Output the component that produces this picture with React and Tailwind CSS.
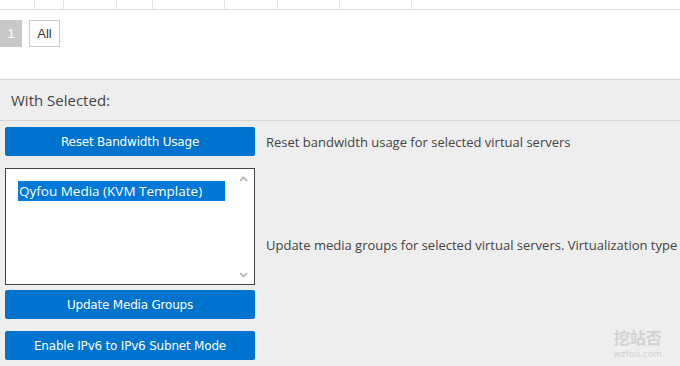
import React from 'react';

const cols = [35, 29, 53, 36, 72, 53, 62, 72];

const ActionButton = ({ children }) => (
  <button className="w-[250px] h-[29px] shrink-0 bg-[#0073cf] text-white text-[12px] rounded-[2px] font-['DejaVu_Sans',sans-serif] tracking-[-0.2px]">
    {children}
  </button>
);

export default function App() {
  return (
    <div className="w-[680px] h-[366px] overflow-hidden bg-white font-['Open_Sans',sans-serif]">
      {/* table bottom edge */}
      <div className="flex h-[10px] border-b border-[#dddddd]">
        {cols.map((w, i) => (
          <div key={i} style={{ width: w }} className="border-r border-[#e4e4e4] shrink-0" />
        ))}
      </div>

      {/* pagination */}
      <div className="flex gap-[7px] mt-[10px] h-[59px] text-[13px] font-['Liberation_Sans',sans-serif]">
        <div className="w-[22px] h-[27px] bg-[#c8c8c8] text-white flex items-center justify-center">1</div>
        <div className="w-[31px] h-[27px] border border-[#cccccc] text-[#333] flex items-center justify-center">All</div>
      </div>

      {/* with selected */}
      <div className="bg-[#eeeeee] border-t border-[#d6d6d6] h-[287px] relative">
        <div className="h-[41px] border-b border-[#d6d6d6] flex items-center pl-[11px] text-[15px] text-[#444] font-['Open_Sans',sans-serif]">
          With Selected:
        </div>

        <div className="pl-[5px] pt-[6px] flex flex-col">
          <div className="flex items-center gap-[11px]">
            <ActionButton>Reset Bandwidth Usage</ActionButton>
            <span className="text-[13px] text-[#444] whitespace-nowrap pt-[2px]">Reset bandwidth usage for selected virtual servers</span>
          </div>

          <div className="flex items-center gap-[11px] mt-[12px]">
            <div className="w-[250px] h-[117px] shrink-0 bg-white border border-[#444] relative pt-[12px] pl-[12px]">
              <div className="w-[207px] h-[20px] bg-[#0078d7] text-white text-[13.5px] leading-[20px] pl-[1px]">
                Qyfou Media (KVM Template)
              </div>
              <svg className="absolute right-[6px] top-[7px]" width="9" height="6" viewBox="0 0 9 6">
                <path d="M1 5 L4.5 1.5 L8 5" stroke="#b0b0b0" strokeWidth="1.6" fill="none" />
              </svg>
              <svg className="absolute right-[6px] bottom-[6px]" width="9" height="6" viewBox="0 0 9 6">
                <path d="M1 1 L4.5 4.5 L8 1" stroke="#b0b0b0" strokeWidth="1.6" fill="none" />
              </svg>
            </div>
            <span className="text-[13px] text-[#444] whitespace-nowrap mt-[38px]">
              Update media groups for selected virtual servers. Virtualization type
            </span>
          </div>

          <div className="mt-[5px]">
            <ActionButton>Update Media Groups</ActionButton>
          </div>
          <div className="mt-[12px]">
            <ActionButton>Enable IPv6 to IPv6 Subnet Mode</ActionButton>
          </div>
        </div>

        {/* watermark */}
        <div className="absolute right-[18px] bottom-[6px] flex flex-col items-center text-[#d2d2d2]">
          <span className="text-[16px] font-bold leading-[18px] font-['Noto_Sans_CJK_SC',sans-serif]">挖站否</span>
          <span className="text-[9px] leading-[11px] mt-[3px] font-['DejaVu_Sans',sans-serif]">wzfou.com</span>
        </div>
      </div>
    </div>
  );
}
